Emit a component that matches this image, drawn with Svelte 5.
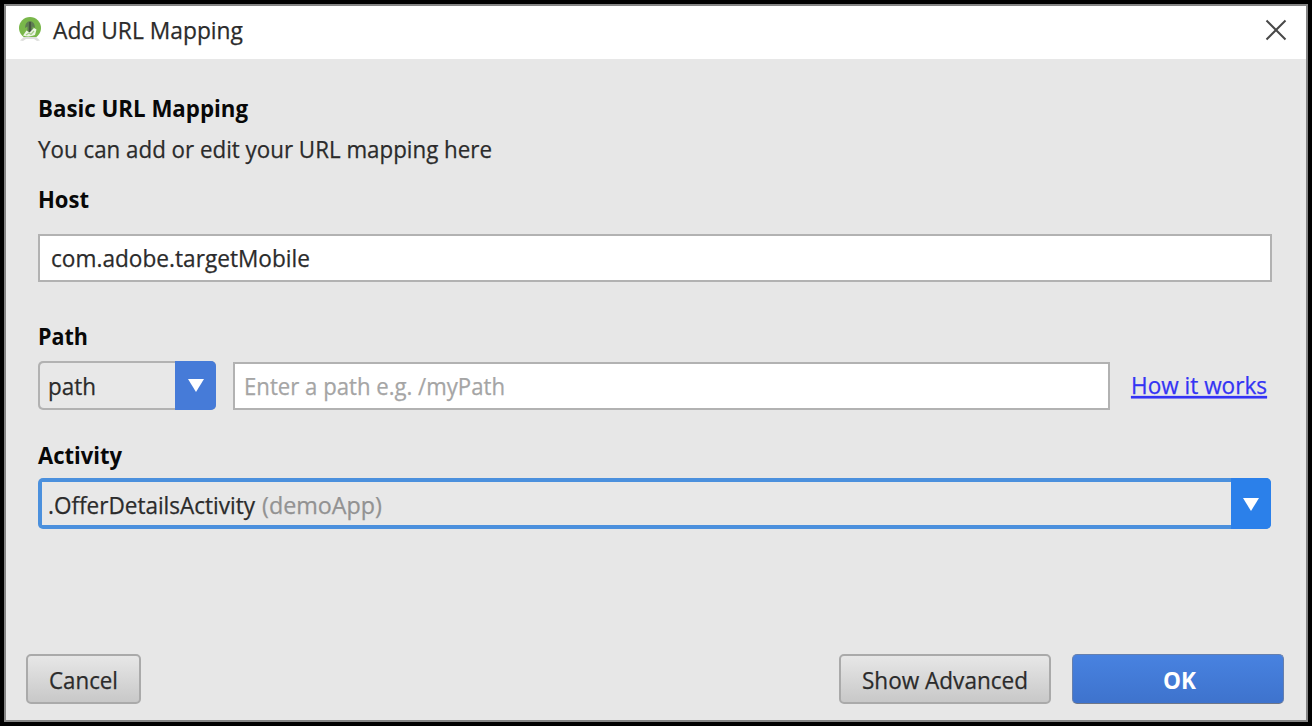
<script>
  let host = $state('com.adobe.targetMobile');
  let pathKind = $state('path');
</script>

{#snippet label(text, width, kind = '')}
  <svg class="label {kind}" {width} height="32" role="img" aria-label={text}>
    <text x="0" y="24" textLength={width} lengthAdjust="spacingAndGlyphs">{text}</text>
  </svg>
{/snippet}

{#snippet arrow()}
  <svg class="arrow" width="16" height="13" viewBox="0 0 16 13"><path d="M0 0H16L8 13Z" fill="#fff" /></svg>
{/snippet}

<div class="screen">
  <div class="dialog">
    <header>
      <svg class="logo" width="24" height="26" viewBox="0 0 24 26">
        <circle cx="12" cy="11" r="11" fill="#79b74a" />
        <path d="M7 11Q7 5 12 4Q17 5 17 11L14.5 9.5V16H9.5V9.5Z" fill="#5f7d52" />
        <path d="M12 5V15" stroke="#47573f" stroke-width="2" />
        <path d="M5 18.5L8.5 13.5L11.5 15.5L16 11L18.5 12.5L17 18Q11 20.5 5 18.5Z" fill="#edf5e6" />
        <path d="M8 18L11 16L13 17.5L16 14" stroke="#a5cb88" stroke-width="1.2" fill="none" />
        <path d="M2 23.5L6 20H18L22 23.5L19 24L16 22H8L5 24Z" fill="#dedfdd" />
      </svg>
      <div class="title">{@render label('Add URL Mapping', 190)}</div>
      <svg class="close" width="22" height="22" viewBox="0 0 22 22"><path d="M1.5 1.5L20.5 20.5M20.5 1.5L1.5 20.5" stroke="#484848" stroke-width="2" /></svg>
    </header>

    <main>
      <div class="heading">{@render label('Basic URL Mapping', 210, 'bold')}</div>
      <div class="intro">{@render label('You can add or edit your URL mapping here', 454)}</div>
      <div class="host-label">{@render label('Host', 51, 'bold')}</div>
      <div class="field host">{@render label(host, 259)}</div>
      <div class="path-label">{@render label('Path', 50, 'bold')}</div>
      <div class="row">
        <div class="combo">
          <div class="value">{@render label(pathKind, 48)}</div>
          <div class="drop">{@render arrow()}</div>
        </div>
        <div class="field path">{@render label('Enter a path e.g. /myPath', 261, 'hint')}</div>
        <div class="link">{@render label('How it works', 136, 'blue')}</div>
      </div>
      <div class="activity-label">{@render label('Activity', 84, 'bold')}</div>
      <div class="combo focused">
        <div class="value">
          {@render label('.OfferDetailsActivity', 207)}
          {@render label('(demoApp)', 120, 'muted')}
        </div>
        <div class="drop">{@render arrow()}</div>
      </div>
    </main>

    <footer>
      <div class="button cancel">{@render label('Cancel', 69)}</div>
      <div class="button wide">{@render label('Show Advanced', 166)}</div>
      <div class="button wide ok">{@render label('OK', 33, 'white')}</div>
    </footer>
  </div>
</div>

<style>
  :global(body) { margin: 0; background: #000; }
  .screen { box-sizing: border-box; width: 1312px; height: 726px; padding: 4px; background: #000; font-family: 'Open Sans', 'Noto Sans', sans-serif; }
  .dialog { box-sizing: border-box; height: 718px; border: 2px solid #858585; background: #e7e7e7; display: flex; flex-direction: column; }
  header { height: 53px; background: #fff; display: flex; align-items: flex-start; padding: 0 19px 0 12px; flex: none; }
  .logo { margin-top: 11px; }
  .title { margin: 9px auto 0 11px; }
  .close { margin-top: 13px; }
  .label { display: block; flex: none; overflow: visible; font-size: 24px; fill: #2b2b2b; stroke: #2b2b2b; stroke-width: 0.25px; }
  .bold { font-weight: 700; fill: #080808; stroke: none; }
  .hint { fill: #a5a5a5; stroke: #a5a5a5; }
  .muted { fill: #929292; stroke: #929292; }
  .blue { fill: #3434f4; stroke: #3434f4; text-decoration: underline; }
  .white { fill: #fff; stroke: none; font-weight: 700; }
  main { padding: 34px 34px 0 32px; flex: 1; }
  .intro { margin-top: 9px; }
  .host-label { margin-top: 18px; }
  .field { box-sizing: border-box; height: 48px; border: 2px solid #b2b2b2; background: #fff; padding: 7px 11px; }
  .host { margin-top: 18px; }
  .path-label { margin-top: 39px; }
  .row { display: flex; margin-top: 8px; height: 49px; align-items: flex-end; }
  .combo { box-sizing: border-box; display: flex; width: 178px; height: 49px; border-radius: 5px; overflow: hidden; background: #b2b2b2; flex: none; }
  .value { box-sizing: border-box; flex: 1; display: flex; gap: 7px; margin: 2px 0 2px 2px; padding: 8px; border-radius: 4px 0 0 4px; background: #e8e8e8; }
  .drop { width: 41px; background: #467bd8; display: flex; align-items: center; justify-content: center; }
  .path { width: 877px; margin-left: 17px; padding: 7px 9px; }
  .link { margin: 0 0 8px 21px; }
  .activity-label { margin-top: 30px; }
  .focused { width: 1233px; height: 51px; margin-top: 6px; background: #4b90dd; }
  .focused .value { margin: 4px 0 4px 4px; padding: 8px 6px; border-radius: 0; }
  .focused .drop { width: 40px; background: #2b80ea; padding-top: 1px; box-sizing: border-box; }
  footer { display: flex; padding: 0 22px 16px 20px; gap: 21px; flex: none; }
  .button { box-sizing: border-box; height: 50px; border: 2px solid #aaa; border-radius: 5px; background: linear-gradient(#e7e7e7, #c8c8c8); display: flex; justify-content: center; padding-top: 9px; }
  .cancel { width: 115px; margin-right: auto; }
  .wide { width: 212px; }
  .ok { border: 1px solid #657fae; border-bottom-color: #6f7788; background: linear-gradient(#4882e0, #3e73cd); padding: 10px 0 0 3px; }
</style>
